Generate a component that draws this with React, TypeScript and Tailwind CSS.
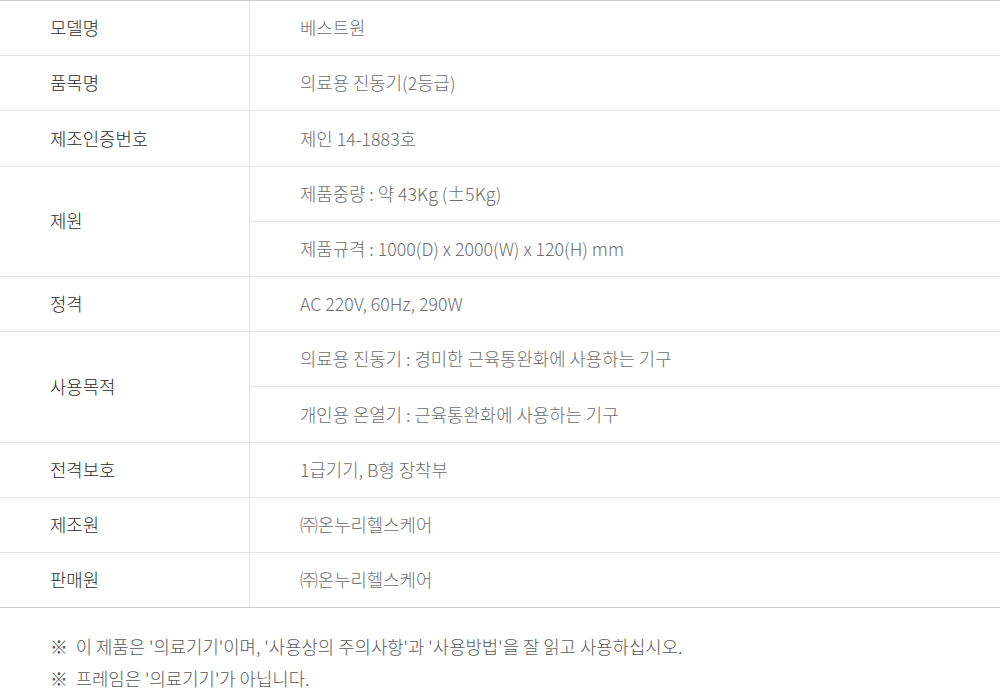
const rows: { label: string; values: string[] }[] = [
    { label: "모델명", values: ["베스트원"] },
    { label: "품목명", values: ["의료용 진동기(2등급)"] },
    { label: "제조인증번호", values: ["제인 14-1883호"] },
    {
        label: "제원",
        values: [
            "제품중량 : 약 43Kg (±5Kg)",
            "제품규격 : 1000(D) x 2000(W) x 120(H) mm",
        ],
    },
    { label: "정격", values: ["AC 220V, 60Hz, 290W"] },
    {
        label: "사용목적",
        values: [
            "의료용 진동기 : 경미한 근육통완화에 사용하는 기구",
            "개인용 온열기 : 근육통완화에 사용하는 기구",
        ],
    },
    { label: "전격보호", values: ["1급기기, B형 장착부"] },
    { label: "제조원", values: ["㈜온누리헬스케어"] },
    { label: "판매원", values: ["㈜온누리헬스케어"] },
];

export default function App() {
    return (
        <div
            className="w-[1000px] bg-white text-[17.8px] font-light"
            style={{ fontFamily: '"Noto Sans CJK KR Light", "Noto Sans CJK KR", "Noto Sans", sans-serif' }}
        >
            <div className="border-t border-b border-[#cccccc]">
                {rows.map((row, i) => (
                    <div
                        key={row.label}
                        className={`flex ${i > 0 ? "border-t border-[#e5e5e5]" : ""}`}
                    >
                        <div className="w-[250px] shrink-0 border-r border-[#e5e5e5] flex items-center pl-[50px] pb-[1px] text-[#2a2a2a]">
                            {row.label}
                        </div>
                        <div className="flex-1 flex flex-col">
                            {row.values.map((v, j) => (
                                <div
                                    key={v}
                                    className={`flex items-center pl-[50px] pb-[1px] text-[#6e6e6e] ${j > 0 ? "h-[55.2px] border-t border-[#e5e5e5]" : "h-[54.2px]"}`}
                                >
                                    {v}
                                </div>
                            ))}
                        </div>
                    </div>
                ))}
            </div>
            <div className="pt-[22px] pl-[50px] text-[#5a5a5a] leading-[32px]">
                <p>※&nbsp; 이 제품은 '의료기기'이며, '사용상의 주의사항'과 '사용방법'을 잘 읽고 사용하십시오.</p>
                <p>※&nbsp; 프레임은 '의료기기'가 아닙니다.</p>
            </div>
        </div>
    );
}
